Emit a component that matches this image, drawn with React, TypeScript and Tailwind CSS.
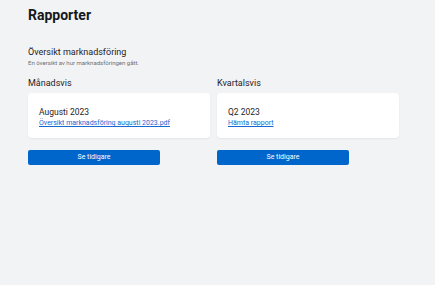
import React from 'react';

interface ReportCardProps {
    label: string;
    title: string;
    link: string;
}

const ReportCard: React.FC<ReportCardProps> = ({ label, title, link }) => (
    <div className="flex flex-col">
        <div className="text-[9px] leading-[11px] text-[#1f2329]">{label}</div>
        <div className="mt-[4px] h-[45px] rounded-[4px] bg-white shadow-[0_1px_2px_rgba(0,0,0,0.06)] px-[11px] pt-[14px]">
            <div className="text-[8.5px] leading-[10px] text-[#1f2329]">{title}</div>
            <a href="#" className="block mt-[2px] text-[7px] leading-[9px] text-[#1769d1] underline">
                {link}
            </a>
        </div>
        <button className="mt-[12px] w-[132px] h-[15px] rounded-[2px] bg-[#0066cc] text-white text-[7px] leading-[15px]">
            Se tidigare
        </button>
    </div>
);

export default function App() {
    return (
        <div className="min-h-[285px] w-[435px] bg-[#f2f3f5] font-['Roboto',sans-serif] text-[#1f2329] pl-[28px] pt-[6px]">
            {/* Title */}
            <h1 className="text-[14px] leading-[18px] font-bold text-[#15181c]">Rapporter</h1>

            {/* Section header */}
            <div className="mt-[23px]">
                <div className="text-[9px] leading-[11px]">Översikt marknadsföring</div>
                <div className="mt-[1px] text-[6px] leading-[8px] text-[#6b7078]">
                    En översikt av hur marknadsföringen gått.
                </div>
            </div>

            {/* Reports */}
            <div className="mt-[11px] grid grid-cols-[182px_182px] gap-x-[7px]">
                <ReportCard
                    label="Månadsvis"
                    title="Augusti 2023"
                    link="Översikt marknadsföring augusti 2023.pdf"
                />
                <ReportCard label="Kvartalsvis" title="Q2 2023" link="Hämta rapport" />
            </div>
        </div>
    );
}
